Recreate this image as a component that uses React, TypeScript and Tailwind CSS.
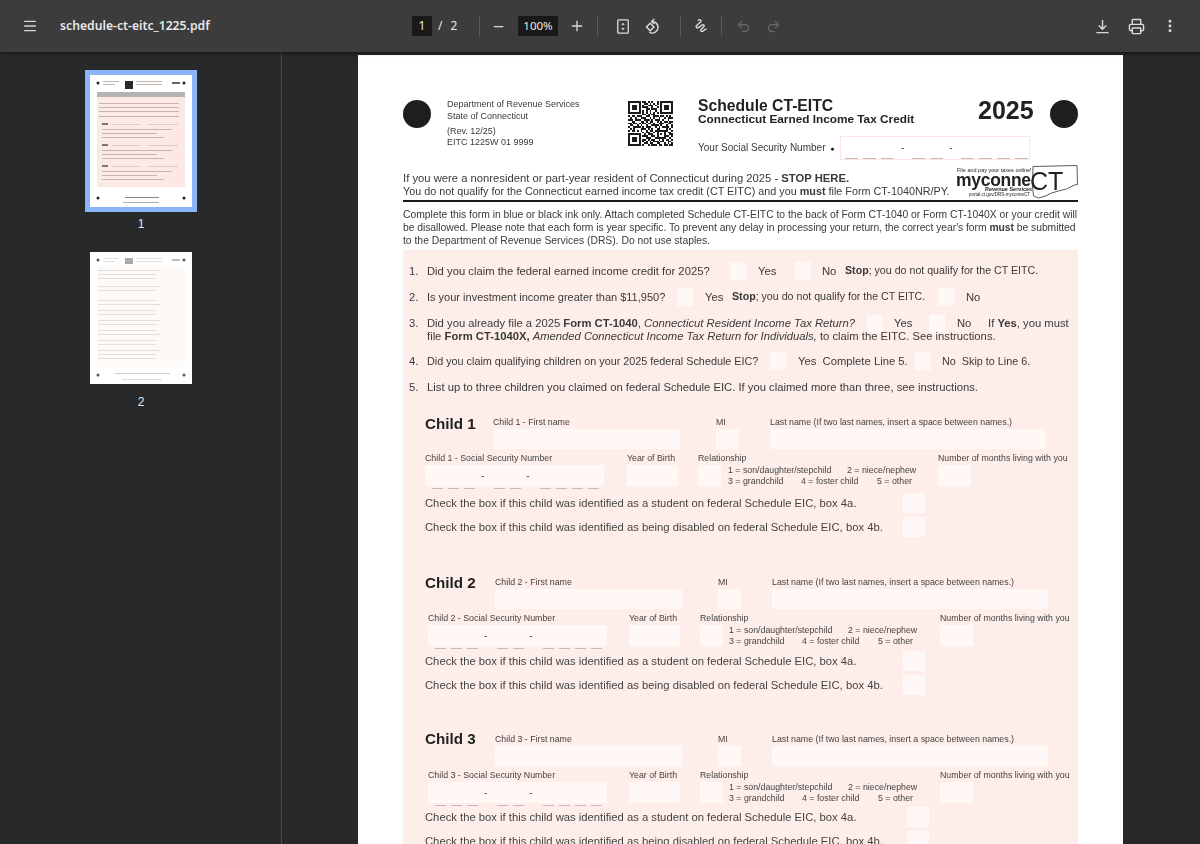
import { EllipsisVertical, Menu, Minus, Plus, Printer, Redo2, Undo2 } from "lucide-react";
import type { ReactNode } from "react";

const qrRows = [
  "1111111011010100101111111",
  "1000001001101010101000001",
  "1011101010011101001011101",
  "1011101011100100101011101",
  "1011101000110111001011101",
  "1000001010101001001000001",
  "1111111010101010101111111",
  "0000000011010110000000000",
  "1011011100110011101101010",
  "0100100111001010010010111",
  "1110111001110101110100100",
  "0011000110101100101011011",
  "1101101011011010011100110",
  "0110010100100111101001001",
  "1001111010111001010111101",
  "0101000111010100110001010",
  "1011010100101101111111001",
  "0000000010110010100010110",
  "1111111001011100101010011",
  "1000001011100110100011101",
  "1011101000111001111110010",
  "1011101011010110010101101",
  "1011101010101011101100110",
  "1000001001101100110010101",
  "1111111010010111011011011",
];

const QrCode = () => (
  <svg viewBox="0 0 25 25" className="w-[45px] h-[45px] shrink-0 mt-[5px]" shapeRendering="crispEdges">
    {qrRows.map((row, y) =>
      row.split("").map((c, x) =>
        c === "1" ? <rect key={`${x}-${y}`} x={x} y={y} width="1" height="1" fill="#1c1c1c" /> : null
      )
    )}
  </svg>
);

const Dashes = ({ className, wide }: { className: string; wide?: boolean }) => (
  <div className={`flex ${className}`}>
    {[3, 2, 4].map((n, g) => (
      <div key={g} className={`flex gap-[5px] ${wide ? "mr-[18px]" : "mr-[19px]"}`}>
        {Array.from({ length: n }).map((_, i) => (
          <div key={i} className={`h-px bg-[#c4bab7] ${wide ? "w-[13px]" : "w-[11px]"}`} />
        ))}
      </div>
    ))}
  </div>
);

const Check = ({ className = "" }: { className?: string }) => (
  <div className={`w-4 h-[18px] shrink-0 bg-[#fff8f7] ${className}`} />
);

const Sep = ({ className = "" }: { className?: string }) => (
  <div className={`w-px h-5 bg-[#5a5a5a] shrink-0 ${className}`} />
);

const Tool = ({ children, className = "w-[30px]" }: { children: ReactNode; className?: string }) => (
  <div className={`h-8 flex items-center justify-center shrink-0 text-[#dadada] ${className}`}>{children}</div>
);

const Thumb = ({ faint }: { faint?: boolean }) => {
  const line = faint ? "#e2dedc" : "#c6b4b0";
  const blocks = [49, 70, 91];
  return (
    <svg viewBox="0 0 102 132" className="block w-[102px] h-[132px] bg-white">
      <g className="blur-[0.4px]">
        <circle cx="8" cy="8" r="1.500" fill={faint ? "#555" : "#222"} />
        <circle cx="94" cy="8" r="1.500" fill={faint ? "#555" : "#222"} />
        <circle cx="8" cy="123" r="1.500" fill={faint ? "#555" : "#222"} />
        <circle cx="94" cy="123" r="1.500" fill={faint ? "#555" : "#222"} />
        <rect x="35" y="6" width="8" height={faint ? 6 : 8} fill={faint ? "#aaa" : "#2a2a2a"} />
        <rect x="13" y="6" width="16" height="1" fill={line} />
        <rect x="13" y="9" width="12" height="1" fill={line} />
        <rect x="46" y="6" width="26" height="1" fill={line} />
        <rect x="46" y="9" width="26" height="1" fill={line} />
        <rect x="82" y="7" width="8" height="2" fill={faint ? "#bbb" : "#666"} />
        {faint ? (
          <>
            <rect x="7" y="15" width="88" height="100" fill="#fdf9f7" />
            {[18, 22, 26, 34, 38, 48, 52, 58, 62, 68, 72, 78, 82, 88, 92, 98, 102, 106].map((y, i) => (
              <rect key={i} x="8" y={y} width={i % 3 === 0 ? 62 : 58} height="1" fill={line} />
            ))}
            <rect x="25" y="121" width="55" height="1" fill="#ccc" />
            <rect x="32" y="127" width="40" height="1" fill="#ddd" />
          </>
        ) : (
          <>
            <rect x="7" y="17" width="88" height="5" fill="#b5b2b2" />
            <rect x="7" y="22" width="88" height="90" fill="#fce9e5" />
            {[28, 32, 36, 41].map((y) => (
              <rect key={y} x="9" y={y} width="80" height="1" fill={line} />
            ))}
            {blocks.map((y) => (
              <g key={y}>
                <rect x="12" y={y - 1} width="6" height="2" fill="#777" />
                <rect x="22" y={y} width="28" height="1" fill="#d8cdca" />
                <rect x="58" y={y} width="30" height="1" fill="#d8cdca" />
                <rect x="12" y={y + 5} width="70" height="1" fill={line} />
                <rect x="12" y={y + 9} width="55" height="1" fill={line} />
                <rect x="12" y={y + 13} width="62" height="1" fill={line} />
              </g>
            ))}
            <rect x="35" y="122" width="34" height="1" fill="#888" />
            <rect x="33" y="127" width="36" height="1" fill="#aaa" />
          </>
        )}
      </g>
    </svg>
  );
};

const Child = ({
  n,
  shifted,
  checkGap,
  titleClass,
  wideBox,
  className,
}: {
  n: number;
  shifted?: boolean;
  checkGap: string;
  titleClass: string;
  wideBox?: boolean;
  className: string;
}) => (
  <div className={className}>
    <div className="flex items-start pl-[22px]">
      <div className={`text-[15.2px] leading-[16px] font-bold text-[#222] shrink-0 ${titleClass} ${shifted ? "w-[70px]" : "w-[68px]"}`}>
        Child {n}
      </div>
      <div className="w-[187px] shrink-0">
        <div className="h-[13px] text-[8.8px] leading-[13px]">Child {n} - First name</div>
        <div className="h-5 bg-[#fff8f7]" />
      </div>
      <div className="w-[23px] ml-9 shrink-0">
        <div className="h-[13px] text-[8.8px] leading-[13px]">MI</div>
        <div className="h-5 bg-[#fff8f7]" />
      </div>
      <div className="w-[276px] ml-[31px] shrink-0">
        <div className="h-[13px] text-[8.8px] leading-[13px] whitespace-nowrap">
          Last name (If two last names, insert a space between names.)
        </div>
        <div className="h-5 bg-[#fff8f7]" />
      </div>
    </div>
    <div className={`flex items-start mt-[3px] ${shifted ? "pl-[25px]" : "pl-[22px]"}`}>
      <div className="w-[179px] shrink-0">
        <div className="h-[13px] text-[8.8px] leading-[13px] whitespace-nowrap">Child {n} - Social Security Number</div>
        <div className="h-[21px] bg-[#fff8f7] flex text-[10px] leading-[21px] pl-[56px]">
          <span>-</span>
          <span className="ml-[42px]">-</span>
        </div>
        <Dashes className="mt-0.5 pl-[7px]" />
      </div>
      <div className={`w-[51px] shrink-0 ${shifted ? "ml-[22px]" : "ml-[23px]"}`}>
        <div className="h-[13px] text-[8.8px] leading-[13px] whitespace-nowrap">Year of Birth</div>
        <div className="h-[21px] bg-[#fff8f7]" />
      </div>
      <div className="w-[23px] ml-5 shrink-0">
        <div className="h-[13px] text-[8.8px] leading-[13px]">Relationship</div>
        <div className="h-[21px] bg-[#fff8f7]" />
      </div>
      <div className={`shrink-0 pt-[13px] text-[8.8px] leading-[10.5px] ${shifted ? "ml-[6px] w-[211px]" : "ml-[7px] w-[210px]"}`}>
        <div className="flex">
          <span className="w-[119px]">1 = son/daughter/stepchild</span>
          <span>2 = niece/nephew</span>
        </div>
        <div className="flex">
          <span className="w-[73px]">3 = grandchild</span>
          <span className="w-[76px]">4 = foster child</span>
          <span>5 = other</span>
        </div>
      </div>
      <div className="w-[33px] shrink-0">
        <div className="h-[13px] text-[8.8px] leading-[13px] whitespace-nowrap">Number of months living with you</div>
        <div className="h-[21px] bg-[#fff8f7]" />
      </div>
    </div>
    <div className={`flex items-center pl-[22px] h-5 text-[11.25px] ${checkGap}`}>
      <div className={`shrink-0 ${wideBox ? "w-[482px]" : "w-[478px]"}`}>
        Check the box if this child was identified as a student on federal Schedule EIC, box 4a.
      </div>
      <div className="w-[22px] h-5 bg-[#fff8f7]" />
    </div>
    <div className="flex items-center pl-[22px] h-5 text-[11.25px] mt-1">
      <div className={`shrink-0 ${wideBox ? "w-[482px]" : "w-[478px]"}`}>
        Check the box if this child was identified as being disabled on federal Schedule EIC, box 4b.
      </div>
      <div className="w-[22px] h-5 bg-[#fff8f7]" />
    </div>
  </div>
);

export default function App() {
  return (
    <div className="h-[844px] overflow-hidden flex flex-col bg-[#28292a] font-['Liberation_Sans',Arial,sans-serif]">
      {/* toolbar */}
      <div className="h-[52px] shrink-0 bg-[#3c3c3c] flex items-center text-[#e8e8e8] shadow-[0_1px_3px_#111] z-10">
        <Menu className="w-4 h-4 ml-[22px] shrink-0 text-[#d8d8d8]" strokeWidth={2} />
        <div className="w-[352px] ml-[22px] shrink-0 text-[12.2px] font-semibold font-['Noto_Sans',sans-serif] whitespace-nowrap">
          schedule-ct-eitc_1225.pdf
        </div>
        <div className="w-5 h-5 bg-[#191919] shrink-0 text-center text-[12px] leading-5 font-['Noto_Sans',sans-serif]">1</div>
        <div className="w-[47px] shrink-0 pl-1.5 text-[12px] font-['Noto_Sans',sans-serif]">
          / <span className="ml-[5px]">2</span>
        </div>
        <Sep />
        <Tool className="w-9">
          <Minus className="w-[15px] h-[15px]" strokeWidth={2} />
        </Tool>
        <div className="w-10 h-5 ml-0.5 bg-[#191919] shrink-0 text-center text-[11.5px] leading-5 font-['Noto_Sans',sans-serif]">
          100%
        </div>
        <Tool className="w-[38px]">
          <Plus className="w-4 h-4" strokeWidth={2} />
        </Tool>
        <Sep className="ml-px" />
        <Tool className="w-[30px] ml-[10px]">
          <svg viewBox="0 0 16 18" className="w-[14px] h-[17px]" fill="none" stroke="currentColor" strokeWidth="1.5">
            <rect x="2" y="1.500" width="12" height="15" rx="1" />
            <path d="M6.500 7 8 5l1.500 2zM6.500 11 8 13l1.500-2z" fill="currentColor" strokeWidth="0.6" />
          </svg>
        </Tool>
        <Tool>
          <svg viewBox="0 0 18 18" className="w-[17px] h-[17px]" fill="none" stroke="currentColor" strokeWidth="1.5">
            <path d="M1.500 9.500 5.500 5.500l4 4-4 4z" />
            <path d="M7.500 3.700a6 6 0 1 1 .2 12.300 6 6 0 0 1-3.200-1.200" />
            <path d="M9.800 1 7 3.700 9.800 6.400" />
          </svg>
        </Tool>
        <Sep className="ml-3" />
        <Tool className="w-10">
          <svg viewBox="0 0 18 18" className="w-4 h-4" fill="none" stroke="currentColor" strokeWidth="1.6" strokeLinecap="round" strokeLinejoin="round">
            <path d="M6 2.500c2-1.500 4 0 2.500 2L4 8.500c-1.500 1.500.5 3.500 2.500 2L10 8c2-1.200 3.500.5 2 2l-3 3c-1 1.500 1 3 2.500 1.500 1-1 2-2 3.500-2" />
          </svg>
        </Tool>
        <Sep />
        <Tool className="w-[30px] ml-1.5 !text-[#686868]">
          <Undo2 className="w-[15px] h-[15px]" strokeWidth={2.2} />
        </Tool>
        <Tool className="w-[30px] !text-[#686868]">
          <Redo2 className="w-[15px] h-[15px]" strokeWidth={2.2} />
        </Tool>
        <div className="ml-auto flex gap-1 pr-[15px]">
          <Tool>
            <svg viewBox="0 0 16 16" className="w-[15px] h-[15px]" fill="none" stroke="currentColor" strokeWidth="1.5">
              <path d="M8 1v9.500M4 7l4 4 4-4M1.500 14.500h13" />
            </svg>
          </Tool>
          <Tool>
            <Printer className="w-[17px] h-[17px]" strokeWidth={2} />
          </Tool>
          <Tool>
            <EllipsisVertical className="w-4 h-4" strokeWidth={2.4} />
          </Tool>
        </div>
      </div>

      <div className="flex flex-1 min-h-0">
        {/* sidebar */}
        <div className="w-[282px] shrink-0 border-r border-[#4d4d4d] pl-[85px] pt-[18px] text-[#e6e6e6] text-[12px]">
          <div className="w-[112px] border-[5px] border-[#8ab4f8]">
            <Thumb />
          </div>
          <div className="w-[112px] text-center mt-[6px] leading-[12px]">1</div>
          <div className="w-[102px] ml-[5px] mt-[22px]">
            <Thumb faint />
          </div>
          <div className="w-[112px] text-center mt-3 leading-[12px]">2</div>
        </div>

        {/* document */}
        <div className="flex-1 min-w-0 bg-[#282828] pl-[76px] pt-[3px]">
          <div className="w-[765px] bg-white px-[45px] pt-[41px] text-[#3a3a3a] blur-[0.3px]">
            <div className="flex items-start h-[70px]">
              <div className="w-7 h-7 rounded-full bg-[#1e1e1e] shrink-0 mt-1" />
              <div className="w-[181px] ml-4 shrink-0 text-[9px] leading-[12px] pt-0.5">
                <div>Department of Revenue Services</div>
                <div>State of Connecticut</div>
                <div className="mt-[3px]">(Rev. 12/25)</div>
                <div className="-mt-px">EITC 1225W 01 9999</div>
              </div>
              <QrCode />
              <div className="ml-[25px] flex-1 min-w-0">
                <div className="flex items-start">
                  <div className="w-[280px] shrink-0">
                    <div className="text-[15.7px] leading-[15px] font-bold text-[#222] mt-0.5">Schedule CT-EITC</div>
                    <div className="text-[11.8px] leading-[13px] font-bold text-[#222]">
                      Connecticut Earned Income Tax Credit
                    </div>
                  </div>
                  <div className="w-[72px] shrink-0 text-[25px] leading-[26px] font-bold text-[#222] mt-px">2025</div>
                  <div className="w-7 h-7 rounded-full bg-[#1e1e1e] shrink-0 mt-1" />
                </div>
                <div className="flex items-start mt-[8px]">
                  <div className="w-[142px] shrink-0 text-[10px] leading-[24px] whitespace-nowrap">
                    Your Social Security Number <span className="text-[7px] text-[#111] ml-0.5">●</span>
                  </div>
                  <div className="w-[190px] h-6 border border-[#fce6e2] bg-white flex flex-col">
                    <div className="h-[21px] flex pl-[60px] text-[10px] leading-[21px]">
                      <span>-</span>
                      <span className="ml-[45px]">-</span>
                    </div>
                    <Dashes wide className="pl-[4px]" />
                  </div>
                </div>
              </div>
            </div>

            <div className="flex items-start h-[35px] -mt-px">
              <div className="flex-1 min-w-0 pt-[7px] whitespace-nowrap leading-[13px]">
                <div className="text-[11.25px]">
                  If you were a nonresident or part-year resident of Connecticut during 2025 - <b>STOP HERE.</b>
                </div>
                <div className="text-[10.8px]">
                  You do not qualify for the Connecticut earned income tax credit (CT EITC) and you <b>must</b> file Form CT-1040NR/PY.
                </div>
              </div>
              <div className="relative w-[122px] h-[33px] shrink-0 text-[#222]">
                <svg viewBox="0 0 46 34" className="absolute right-0 top-0 w-[46px] h-[34px]" fill="none" stroke="#333" strokeWidth="0.8">
                  <path d="M1 1.500 45 .5l.500 19-3 .500-8 4-8 2-7 2-6 3-7 2-5-2-1-10z" />
                </svg>
                <div className="absolute left-px top-[3px] text-[5.500px] leading-[5px] whitespace-nowrap">File and pay your taxes online!</div>
                <div className="absolute left-0 top-[8px] text-[17.5px] leading-[14px] font-bold tracking-[-0.3px] whitespace-nowrap">myconne</div>
                <div className="absolute left-[74px] top-[5px] text-[25px] leading-[22px] whitespace-nowrap">CT</div>
                <div className="absolute left-[29px] top-[22px] text-[5.500px] leading-[5px] font-bold whitespace-nowrap">Revenue Services</div>
                <div className="absolute left-[13px] top-[27px] text-[4.500px] leading-[5px] whitespace-nowrap">portal.ct.gov/DRS-myconneCT</div>
              </div>
            </div>

            <div className="h-0.5 bg-[#1a1a1a]" />

            <div className="text-[10.35px] leading-[13px] mt-1.5 h-[42px] whitespace-nowrap">
              <div>Complete this form in blue or black ink only. Attach completed Schedule CT-EITC to the back of Form CT-1040 or Form CT-1040X or your credit will</div>
              <div className="tracking-[-0.04px]">be disallowed. Please note that each form is year specific. To prevent any delay in processing your return, the correct year's form <b>must</b> be submitted</div>
              <div>to the Department of Revenue Services (DRS). Do not use staples.</div>
            </div>

            <div className="bg-[#fdeeea] pt-2 pb-10 text-[11.25px] whitespace-nowrap">
              <div className="flex items-center h-[26px]">
                <span className="w-6 pl-1.5 shrink-0">1.</span>
                <span className="w-[303px] shrink-0">Did you claim the federal earned income credit for 2025?</span>
                <Check />
                <span className="ml-3 w-[37px]">Yes</span>
                <Check />
                <span className="ml-[11px] w-[23px]">No</span>
                <span className="text-[10.65px]"><b>Stop</b>; you do not qualify for the CT EITC.</span>
              </div>
              <div className="flex items-center h-[26px]">
                <span className="w-6 pl-1.5 shrink-0">2.</span>
                <span className="w-[250px] shrink-0 text-[11px]">Is your investment income greater than $11,950?</span>
                <Check />
                <span className="ml-3 w-[27px]">Yes</span>
                <span className="w-[206px] text-[10.65px]"><b>Stop</b>; you do not qualify for the CT EITC.</span>
                <Check />
                <span className="ml-3">No</span>
              </div>
              <div className="mt-[7px] leading-[13px]">
                <div className="flex items-center h-[13px]">
                  <span className="w-6 pl-1.5 shrink-0">3.</span>
                  <span className="w-[440px] shrink-0">
                    Did you already file a 2025 <b>Form CT-1040</b>, <i>Connecticut Resident Income Tax Return?</i>
                  </span>
                  <Check />
                  <span className="ml-[11px] w-[35px]">Yes</span>
                  <Check />
                  <span className="ml-3 w-[31px]">No</span>
                  <span>If <b>Yes</b>, you must</span>
                </div>
                <div className="pl-6">
                  file <b>Form CT-1040X,</b> <i>Amended Connecticut Income Tax Return for Individuals,</i> to claim the EITC. See instructions.
                </div>
              </div>
              <div className="flex items-center h-[26px] mt-[5px]">
                <span className="w-6 pl-1.5 shrink-0">4.</span>
                <span className="w-[343px] shrink-0 text-[10.8px]">Did you claim qualifying children on your 2025 federal Schedule EIC?</span>
                <Check />
                <span className="ml-3 w-[117px]">Yes&nbsp; Complete Line 5.</span>
                <Check />
                <span className="ml-[11px] text-[10.8px]">No&nbsp; Skip to Line 6.</span>
              </div>
              <div className="flex items-center h-[26px]">
                <span className="w-6 pl-1.5 shrink-0">5.</span>
                <span>List up to three children you claimed on federal Schedule EIC. If you claimed more than three, see instructions.</span>
              </div>

              <Child n={1} checkGap="mt-1" titleClass="mt-0" className="mt-4 text-[#444]" />
              <Child n={2} shifted checkGap="mt-0.5" titleClass="-mt-px" className="mt-[39px] text-[#444]" />
              <Child n={3} shifted checkGap="mt-px" titleClass="-mt-0.5" wideBox className="mt-[38px] text-[#444]" />
            </div>
          </div>
        </div>
      </div>
    </div>
  );
}
